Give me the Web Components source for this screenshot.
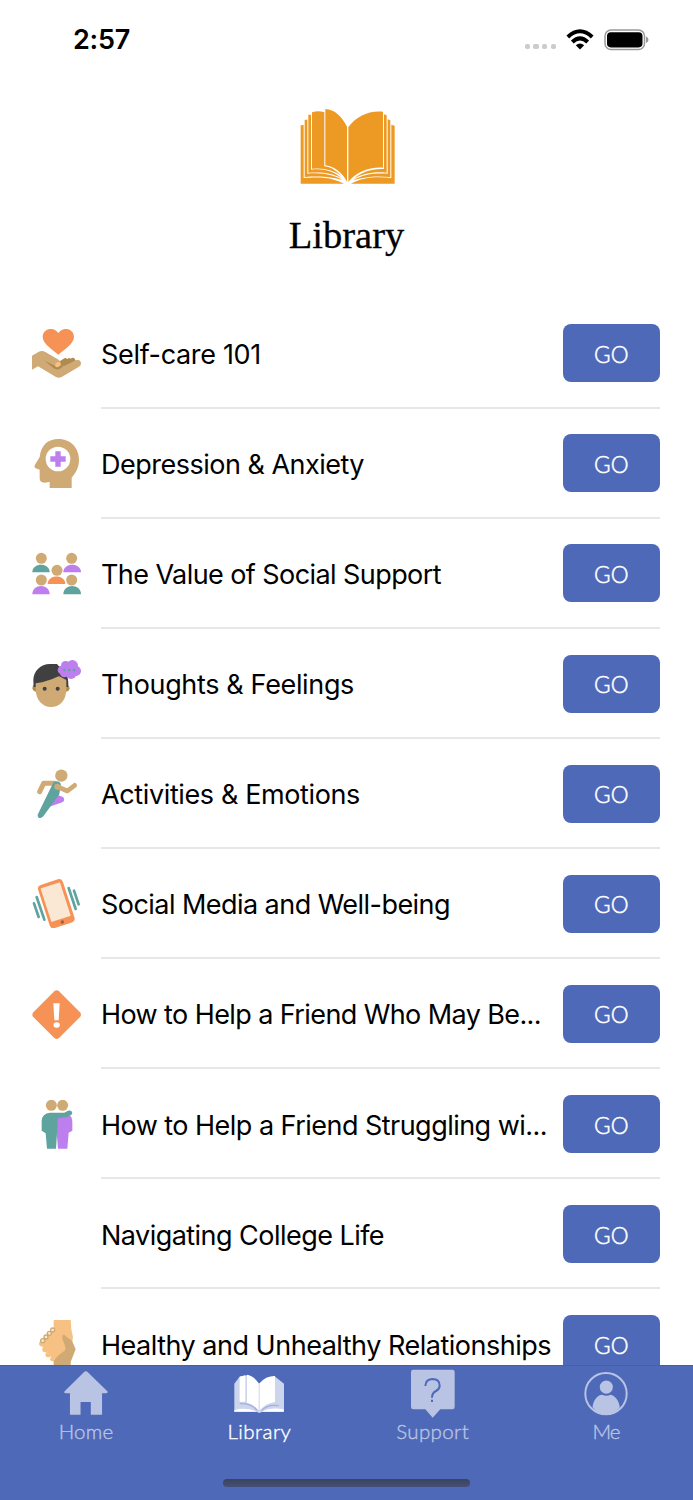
<!DOCTYPE html>
<html lang="en">
<head>
<meta charset="utf-8">
<title>Library</title>
<style>
    body {
        margin: 0;
        background: #fff;
        font-family: Inter, "Liberation Sans", sans-serif;
    }
</style>
</head>
<body>
<app-screen></app-screen>

<script>
const ICONS = {
    care: `<svg viewBox="37 41 147 147">
        <path fill="#f79256" d="M116 118C101 105 69 86 69 65C69 41 101 31 116 53C131 31 163 41 163 65C163 86 131 105 116 118Z"/>
        <path fill="#b08b50" d="M112 143L134 129Q139 127 143 131Q149 126 153 130Q160 125 164 129L169 138L140 154L120 155Z"/>
        <path fill="#cfaa74" d="M37 121L56 110Q66 105 76 109L118 134Q124 140 124 149L132 153L168 135Q184 130 184 146Q184 150 178 154L126 185Q117 190 109 185L55 153L37 163Z"/>
        <path fill="#b08b50" d="M75 136L107 152L124 150L131 153L121 160Q111 165 102 159Z"/>
        <path fill="#f7c184" d="M106 149Q107 141 115 140Q123 139 123 146Q121 155 112 156Q106 156 106 149Z"/></svg>`,
    mind: `<svg viewBox="37 372 147 147">
        <path fill="#cfaa74" d="M117 372C154 372 178 400 178 434C178 458 169 471 156 488V519H90V501L74 503Q60 503 60 489V464L48 460Q42 457 45 451L60 426C64 391 84 372 117 372Z"/>
        <circle fill="#fff" cx="115" cy="432" r="37"/>
        <path fill="#bd7eee" d="M107 409H123V424H138V440H123V455H107V440H92V424H107Z"/></svg>`,
    group: `<svg viewBox="37 42 147 147">
        <g fill="#cfaa74"><circle cx="65" cy="70" r="16.5"/><circle cx="156" cy="70" r="16.5"/><circle cx="112" cy="106" r="16.5"/><circle cx="65" cy="135" r="16.5"/><circle cx="156" cy="135" r="16.5"/></g>
        <g fill="#5fa39f"><path d="M38 112C38 82 90 82 90 112Z"/><path d="M131 178C131 145 184 145 184 178Z"/></g>
        <g fill="#bd7eee"><path d="M131 112C131 82 184 82 184 112Z"/><path d="M38 178C38 145 90 145 90 178Z"/></g>
        <path fill="#f79256" d="M84 147C84 117 137 117 137 147Z"/></svg>`,
    thought: `<svg viewBox="37 372 147 147">
        <path fill="#b08b50" d="M43 448Q37 454 38 461Q41 469 49 470L139 470Q148 469 150 461Q150 453 144 451L130 452L55 450Z"/>
        <path fill="#404041" d="M42 456L41 435C42 408 62 387 91 387H112L117 393C140 405 147 423 146 456Z"/>
        <path fill="#cfaa74" d="M48 445Q88 438 113 425L119 424Q131 431 140 435V462C140 498 119 516 94 516C68 516 48 494 48 462Z"/>
        <circle fill="#404041" cx="75" cy="461" r="6"/><circle fill="#404041" cx="114" cy="461" r="6"/>
        <g fill="#bd7eee"><circle cx="127" cy="405" r="13"/><circle cx="138" cy="392" r="14"/><circle cx="158" cy="392" r="17"/><circle cx="169" cy="408" r="15"/><circle cx="154" cy="415" r="17"/><circle cx="134" cy="414" r="13"/></g>
        <g fill="#5fa39f"><circle cx="134" cy="405" r="4"/><circle cx="149" cy="405" r="4"/><circle cx="163" cy="405" r="4"/></g></svg>`,
    runner: `<svg viewBox="37 42 147 147">
        <circle fill="#cfaa74" cx="125" cy="62" r="18.5"/>
        <path fill="none" stroke="#cfaa74" stroke-width="15" stroke-linecap="round" stroke-linejoin="round" d="M60 110L72 85H104"/>
        <path fill="#bd7eee" d="M112 119L130 126Q138 136 128 142L87 156Z"/>
        <path fill="#5fa39f" d="M102 81Q111 76 119 81Q125 85 123 92L119 118L71 184Q65 191 57 188Q52 184 55 177L90 105Z"/>
        <path fill="none" stroke="#cfaa74" stroke-width="14" stroke-linecap="round" stroke-linejoin="round" d="M113 95L143 108L165 91"/>
        <circle fill="#cfaa74" cx="113" cy="95" r="9"/></svg>`,
    phone: `<svg viewBox="37 372 147 147">
        <g transform="rotate(-18 110 446)"><rect fill="#f79256" x="71" y="378" width="78" height="136" rx="12"/><rect fill="#fae7d4" x="79" y="388" width="61" height="106" rx="2"/><circle fill="#a0622e" cx="110" cy="504" r="5"/></g>
        <path fill="none" stroke="#5fa39f" stroke-width="8" stroke-linecap="round" d="M43 445L57 486M51 426L74 494M147 399L168 462M163 407L177 448"/></svg>`,
    alert: `<svg viewBox="37 42 147 147">
        <path fill="#f79256" d="M104 46Q111 40 118 46L181 109Q187 116 181 123L118 186Q111 192 104 186L41 123Q35 116 41 109Z"/>
        <path fill="#fff" d="M101 82H120L117 133H104Z"/><ellipse fill="#fff" cx="111" cy="147" rx="9.5" ry="8"/></svg>`,
    friends: `<svg viewBox="37 374 147 147">
        <circle fill="#cfaa74" cx="95" cy="390" r="16.5"/><circle fill="#cfaa74" cx="129" cy="390" r="16.5"/>
        <path fill="#bd7eee" d="M113 427L148 419Q158 423 158 442V466L147 472L143 520H115L111 472Z"/>
        <path fill="#5fa39f" d="M66 437Q67 414 91 412L134 412L145 406Q156 404 158 412Q158 418 150 421Q141 427 125 427L115 429L109 520H82L78 474L66 466Z"/></svg>`,
    none: '',
    hands: `<svg viewBox="37 60 147 147">
        <path fill="#f7c184" d="M102 60H153L155 88L160 112L155 140L109 184Q97 186 91 180Q91 172 96 169Q83 175 78 169Q75 162 81 156Q72 159 68 152Q66 145 71 140Q59 140 58 132Q58 125 65 119L102 87Z"/>
        <path fill="#cfaa74" d="M129 104Q136 104 141 111L157 122L168 148L153 186V207H102V184Q113 166 134 153Q140 149 136 138L128 116Z"/>
        <g fill="#fbe8d0" stroke="#cfaa74" stroke-width="4"><circle cx="69" cy="122" r="6"/><circle cx="79" cy="111" r="6"/><circle cx="89" cy="100" r="6"/><circle cx="99" cy="90" r="6"/></g></svg>`,
    book: `<svg width="95" height="77" viewBox="61 40 285 231">
        <g fill="#ed9a25">
            <path d="M97 53Q116 47 134 53V215Q158 216 185 244Q151 217 97 222Z"/>
            <path d="M137 43C165 44 187 66 202 96V261C187 233 165 216 137 212Z"/>
            <path d="M206 97C230 66 265 47 310 51V219C264 217 228 235 206 262Z"/>
            <path d="M86 60L94 60V225C138 220 163 232 186 250C159 236 132 231 86 234Z"/>
            <path d="M75 75L83 75V237C136 233 165 243 188 256C157 248 128 243 75 247Z"/>
            <path d="M63 92L72 91V250C130 245 160 250 193 267H63Z"/>
            <path d="M313 59L321 62V234C279 230 248 238 222 252C246 232 277 221 313 223Z"/>
            <path d="M324 74L332 77V247C281 242 250 248 220 257C249 240 280 235 324 237Z"/>
            <path d="M335 90L345 93V267H214C250 249 284 245 335 250Z"/>
        </g></svg>`,
    wifi: `<svg width="28" height="21" viewBox="0 0 28 21">
        <path d="M14 20.5L9.8 16.2Q14 12.8 18.2 16.2Z"/>
        <path fill="none" stroke="#000" stroke-width="4" d="M1.8 8Q14 -3.5 26.2 8M6.3 13Q14 5.8 21.7 13"/></svg>`,
    battery: `<svg width="45" height="22" viewBox="0 0 45 22">
        <rect x="1" y="1" width="39.5" height="19.6" rx="6" fill="none" stroke="#999" stroke-width="1.5"/>
        <rect x="3" y="3.2" width="35.5" height="15.2" rx="3.8"/><path fill="#999" d="M42 7.5Q44.5 8.5 44.5 10.8T42 14.1Z"/></svg>`,
    home: `<svg width="44" height="45" viewBox="132 213 133 135">
        <path fill="#b9c3e4" d="M192 216Q198 211 204 216L263 274Q266 280 258 280H247V345H213V306H182V345H150V280H138Q130 279 134 274Z"/></svg>`,
    pages: `<svg width="50" height="39" viewBox="105 55 150 115">
        <path fill="#cdd5ed" d="M106 83L123 61L148 57L180 82L226 60L255 83V167H190L181 171L172 167H106Z"/>
        <path fill="#fff" d="M122 63L139 58V137H122ZM144 56Q166 60 179 83V163Q163 144 144 140ZM182 82Q199 60 228 60V138Q202 141 182 163ZM106 162Q143 153 174 167H106ZM188 167Q216 152 254 160V167Z"/>
        <path fill="none" stroke="#a3b0db" stroke-width="4" d="M122 143Q156 141 174 163M188 163Q205 145 239 149"/></svg>`,
    question: `<svg width="44" height="49" viewBox="91 41 132 147">
        <path fill="#b9c3e4" d="M98 43H215Q222 43 222 50V155Q222 162 215 162H179L156 187L134 162H98Q91 162 91 155V50Q91 43 98 43Z"/>
        <path fill="none" stroke="#4e69b8" stroke-width="6" d="M134 92Q135 71 156 71Q177 72 177 91Q177 101 166 107Q154 113 154 127M154 133V140"/></svg>`,
    person: `<svg width="44" height="45" viewBox="609 47 134 135">
        <circle cx="676" cy="115" r="63" fill="none" stroke="#b9c3e4" stroke-width="6"/>
        <circle cx="677" cy="95" r="20" fill="#b9c3e4"/>
        <path fill="#b9c3e4" d="M635 156C637 135 650 119 664 118Q677 124 690 118C704 121 716 137 718 156Q701 180 676 180Q652 180 635 156Z"/></svg>`
};

const TOPICS = [
    { icon: 'care', title: 'Self-care 101', width: 160 },
    { icon: 'mind', title: 'Depression & Anxiety', width: 263 },
    { icon: 'group', title: 'The Value of Social Support', width: 340 },
    { icon: 'thought', title: 'Thoughts & Feelings', width: 253 },
    { icon: 'runner', title: 'Activities & Emotions', width: 259 },
    { icon: 'phone', title: 'Social Media and Well-being', width: 349 },
    { icon: 'alert', title: 'How to Help a Friend Who May Be...', width: 440 },
    { icon: 'friends', title: 'How to Help a Friend Struggling wi...', width: 446 },
    { icon: 'none', title: 'Navigating College Life', width: 283 },
    { icon: 'hands', title: 'Healthy and Unhealthy Relationships', width: 450 }
];

// Text tracked out or in so that it fills a given width
class FitText extends HTMLElement {
    constructor() {
        super();
        this.attachShadow({ mode: 'open' });
    }

    connectedCallback() {
        this.shadowRoot.innerHTML = `
            <style>
                :host { display: inline-block; white-space: nowrap; }
            </style>
            <slot></slot>
        `;
        const nodes = this.shadowRoot.querySelector('slot').assignedNodes({ flatten: true });
        const text = nodes.map(node => node.textContent).join('').trim();
        const target = Number(this.getAttribute('width'));
        const natural = this.getBoundingClientRect().width;
        if (text.length) {
            this.style.letterSpacing = `${((target - natural) / text.length).toFixed(3)}px`;
        }
    }
}
customElements.define('fit-text', FitText);

class StatusBar extends HTMLElement {
    constructor() {
        super();
        this.attachShadow({ mode: 'open' });
    }

    connectedCallback() {
        this.shadowRoot.innerHTML = `
            <style>
                :host {
                    display: flex;
                    align-items: center;
                    justify-content: space-between;
                    height: 79px;
                    padding: 0 44px 0 73px;
                    box-sizing: border-box;
                }
                .time { font-size: 27px; font-weight: 600; }
                .status { display: flex; align-items: center; }
                .dots { display: flex; gap: 3.4px; margin: 14px 10px 0 0; }
                .dots i { width: 5.3px; height: 5.3px; border-radius: 1.8px; background: #ccc; }
                svg { display: block; }
                .battery { margin-left: 10px; }
            </style>
            <div class="time"><fit-text width="57">2:57</fit-text></div>
            <div class="status">
                <div class="dots"><i></i><i></i><i></i><i></i></div>
                ${ICONS.wifi}
                <div class="battery">${ICONS.battery}</div>
            </div>
        `;
    }
}
customElements.define('status-bar', StatusBar);

class PageHeader extends HTMLElement {
    constructor() {
        super();
        this.attachShadow({ mode: 'open' });
    }

    connectedCallback() {
        this.shadowRoot.innerHTML = `
            <style>
                :host {
                    display: flex;
                    flex-direction: column;
                    align-items: center;
                    height: 219.4px;
                    padding-top: 29px;
                    box-sizing: border-box;
                }
                svg { display: block; margin-left: 2px; }
                h1 {
                    margin: 27px 0 0;
                    font: 400 38.5px/46px "Liberation Serif", serif;
                    -webkit-text-stroke: 0.3px #000;
                }
            </style>
            ${ICONS.book}
            <h1><fit-text width="115.5"><slot></slot></fit-text></h1>
        `;
    }
}
customElements.define('page-header', PageHeader);

class GoButton extends HTMLElement {
    constructor() {
        super();
        this.attachShadow({ mode: 'open' });
    }

    connectedCallback() {
        this.shadowRoot.innerHTML = `
            <style>
                :host { display: block; flex: none; }
                button {
                    display: block;
                    width: 97px;
                    height: 58px;
                    padding: 2px 0 0;
                    border: none;
                    border-radius: 8px;
                    background: #4e69b8;
                    color: #fff;
                    font: 300 22.5px Lato, sans-serif;
                    -webkit-text-stroke: 0.5px currentColor;
                }
            </style>
            <button><fit-text width="35"><slot></slot></fit-text></button>
        `;
    }
}
customElements.define('go-button', GoButton);

class TopicRow extends HTMLElement {
    constructor() {
        super();
        this.attachShadow({ mode: 'open' });
    }

    connectedCallback() {
        this.shadowRoot.innerHTML = `
            <style>
                :host {
                    display: flex;
                    height: 110.12px;
                    padding: 0 33px 0 32px;
                }
                .icon {
                    display: flex;
                    align-items: center;
                    width: 68.5px;
                    flex: none;
                }
                svg { width: 49px; height: 49px; margin-left: 0.3px; }
                .body {
                    display: flex;
                    flex: 1;
                    align-items: center;
                    justify-content: space-between;
                    min-width: 0;
                    padding-top: 1.6px;
                    border-bottom: 2px solid #e7e7e7;
                    box-sizing: border-box;
                }
                .title { font-size: 27px; line-height: 36px; padding: 3px 0 0 0.5px; }
            </style>
            <div class="icon">${ICONS[this.getAttribute('icon')]}</div>
            <div class="body">
                <div class="title"><fit-text width="${this.getAttribute('title-width')}"><slot></slot></fit-text></div>
                <go-button>GO</go-button>
            </div>
        `;
    }
}
customElements.define('topic-row', TopicRow);

class TabItem extends HTMLElement {
    constructor() {
        super();
        this.attachShadow({ mode: 'open' });
    }

    connectedCallback() {
        this.shadowRoot.innerHTML = `
            <style>
                :host {
                    display: flex;
                    flex: 1;
                    flex-direction: column;
                    align-items: center;
                    color: #b9c3e4;
                    font: 300 20.5px/24px Lato, sans-serif;
                    -webkit-text-stroke: 0.4px currentColor;
                }
                :host([active]) { color: #fff; }
                .icon { display: flex; align-items: center; height: 50px; margin: 2px 1px 0 0; }
                .label { margin: 1px 1px 0 0; }
            </style>
            <div class="icon">${ICONS[this.getAttribute('icon')]}</div>
            <div class="label"><fit-text width="${this.getAttribute('label-width')}"><slot></slot></fit-text></div>
        `;
    }
}
customElements.define('tab-item', TabItem);

class TabBar extends HTMLElement {
    constructor() {
        super();
        this.attachShadow({ mode: 'open' });
    }

    connectedCallback() {
        this.shadowRoot.innerHTML = `
            <style>
                :host {
                    display: flex;
                    flex-direction: column;
                    justify-content: space-between;
                    align-items: center;
                    height: 135px;
                    box-sizing: border-box;
                    border-top: 1px solid #465fa9;
                    background: #4e69b8;
                }
                nav { display: flex; width: 100%; }
                .indicator {
                    width: 247px;
                    height: 8px;
                    margin-bottom: 13.5px;
                    border-radius: 4px;
                    background: linear-gradient(#3b435b, #465077);
                }
            </style>
            <nav><slot></slot></nav>
            <div class="indicator"></div>
        `;
    }
}
customElements.define('tab-bar', TabBar);

class AppScreen extends HTMLElement {
    constructor() {
        super();
        this.attachShadow({ mode: 'open' });
    }

    connectedCallback() {
        const rows = TOPICS.map(topic => `
            <topic-row icon="${topic.icon}" title-width="${topic.width}">${topic.title.replace('&', '&amp;')}</topic-row>
        `).join('');
        this.shadowRoot.innerHTML = `
            <style>
                :host {
                    display: flex;
                    flex-direction: column;
                    width: 693px;
                    height: 1500px;
                    overflow: hidden;
                    color: #000;
                }
                main { flex: 1; min-height: 0; overflow: hidden; }
                tab-bar { flex: none; }
            </style>
            <main>
                <status-bar></status-bar>
                <page-header>Library</page-header>
                ${rows}
            </main>
            <tab-bar>
                <tab-item icon="home" label-width="55">Home</tab-item>
                <tab-item icon="pages" label-width="64" active>Library</tab-item>
                <tab-item icon="question" label-width="73">Support</tab-item>
                <tab-item icon="person" label-width="27">Me</tab-item>
            </tab-bar>
        `;
    }
}
customElements.define('app-screen', AppScreen);
</script>
</body>
</html>
